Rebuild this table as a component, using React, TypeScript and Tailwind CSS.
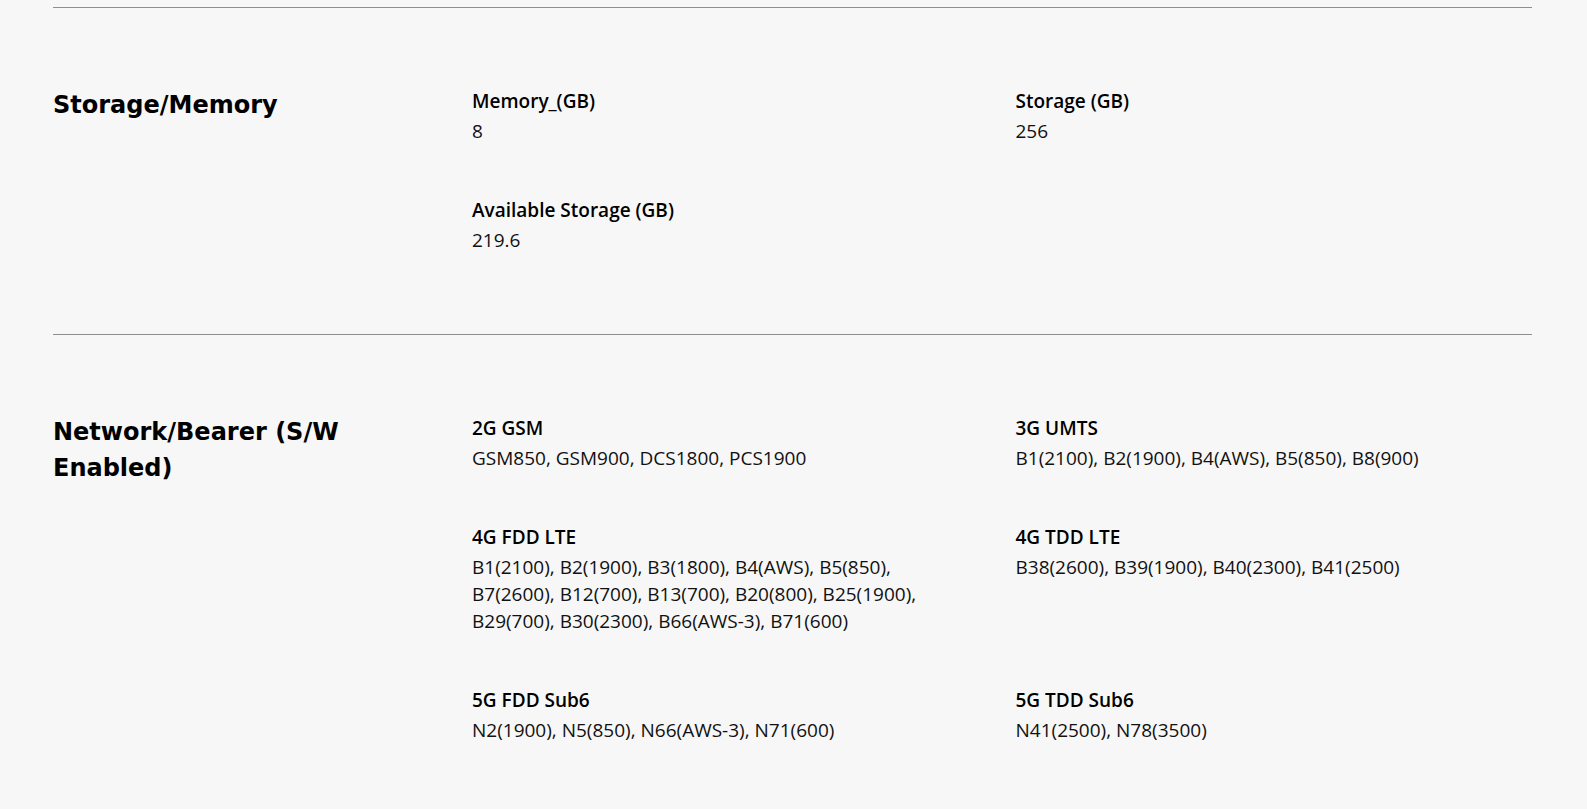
const sections = [
  {
    title: "Storage/Memory",
    specs: [
      { label: "Memory_(GB)", value: "8" },
      { label: "Storage (GB)", value: "256" },
      { label: "Available Storage (GB)", value: "219.6" },
    ],
  },
  {
    title: "Network/Bearer (S/W Enabled)",
    specs: [
      { label: "2G GSM", value: "GSM850, GSM900, DCS1800, PCS1900" },
      { label: "3G UMTS", value: "B1(2100), B2(1900), B4(AWS), B5(850), B8(900)" },
      {
        label: "4G FDD LTE",
        value:
          "B1(2100), B2(1900), B3(1800), B4(AWS), B5(850), B7(2600), B12(700), B13(700), B20(800), B25(1900), B29(700), B30(2300), B66(AWS-3), B71(600)",
      },
      { label: "4G TDD LTE", value: "B38(2600), B39(1900), B40(2300), B41(2500)" },
      { label: "5G FDD Sub6", value: "N2(1900), N5(850), N66(AWS-3), N71(600)" },
      { label: "5G TDD Sub6", value: "N41(2500), N78(3500)" },
    ],
  },
];

export default function App() {
  return (
    <div className="min-h-screen bg-[#f7f7f7] pt-[7px] pl-[53px] pr-[55px] text-black">
      {sections.map((section) => (
        <section
          key={section.title}
          className="grid grid-cols-[419px_1fr] border-t border-[#8e8e8e] pt-[81px] pb-[80px]"
        >
          {/* Section heading */}
          <h2 className="-mt-[2px] pr-[70px] font-['DejaVu_Sans',sans-serif] text-[24px] font-bold leading-[36px]">
            {section.title}
          </h2>

          <div className="grid grid-cols-2 gap-x-[27px] gap-y-[53px] font-['Open_Sans',sans-serif]">
            {section.specs.map((spec) => (
              <div key={spec.label} className="pr-10">
                <p className="text-[19px] font-semibold leading-[24px]">{spec.label}</p>
                <p className="mt-[5px] text-[19px] font-normal leading-[27px] text-[#111]">
                  {spec.value}
                </p>
              </div>
            ))}
          </div>
        </section>
      ))}
    </div>
  );
}
